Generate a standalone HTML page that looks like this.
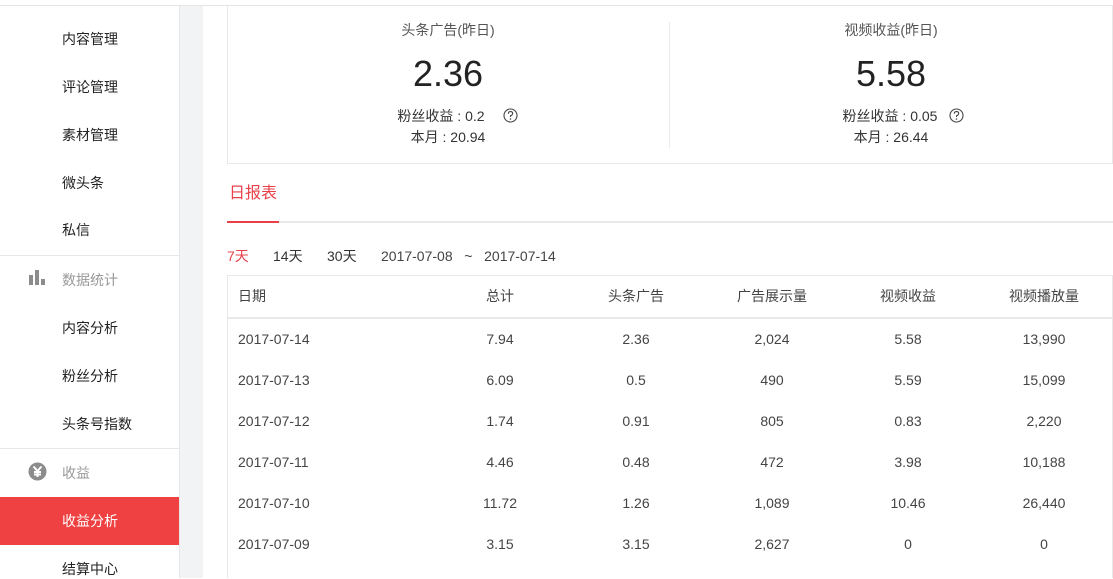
<!DOCTYPE html>
<html><head><meta charset="utf-8"><style>
*{margin:0;padding:0;box-sizing:border-box}
body{width:1113px;height:578px;overflow:hidden;background:#fff;position:relative;font-family:"Liberation Sans","Noto Sans CJK SC",sans-serif;color:#333;font-size:14px}
.a{position:absolute;white-space:nowrap}
.si{position:absolute;left:62px;font-size:14px;color:#222;line-height:20px}
.c{position:absolute;text-align:center;line-height:20px;color:#333}
</style></head><body>
<div class="a" style="left:0;top:5px;width:1113px;height:1px;background:#e4e4e4"></div>
<div class="a" style="left:179px;top:6px;width:24px;height:572px;background:#f2f3f5;border-left:1px solid #e6e7ea"></div>
<div class="si" style="top:29px">内容管理</div>
<div class="si" style="top:77px">评论管理</div>
<div class="si" style="top:125px">素材管理</div>
<div class="si" style="top:173px">微头条</div>
<div class="si" style="top:220px">私信</div>
<div class="a" style="left:0;top:255px;width:179px;height:1px;background:#e8e8e8"></div>
<svg class="a" style="left:28px;top:270px" width="18" height="16"><rect x="1" y="5" width="4" height="10" fill="#8c8c8c"/><rect x="7" y="0" width="4" height="15" fill="#8c8c8c"/><rect x="13" y="9" width="4" height="6" fill="#8c8c8c"/></svg>
<div class="si" style="top:270px;color:#999">数据统计</div>
<div class="si" style="top:318px">内容分析</div>
<div class="si" style="top:366px">粉丝分析</div>
<div class="si" style="top:414px">头条号指数</div>
<div class="a" style="left:0;top:448px;width:179px;height:1px;background:#e8e8e8"></div>
<svg class="a" style="left:28px;top:462px" width="19" height="19"><circle cx="9.5" cy="9.5" r="9" fill="#8c8c8c"/><path d="M5.5 4.5 L9.5 9 L13.5 4.5 M9.5 9 V15 M6 10 H13 M6 12.5 H13" stroke="#fff" stroke-width="2" fill="none"/></svg>
<div class="si" style="top:463px;color:#999">收益</div>
<div class="a" style="left:0;top:497px;width:179px;height:48px;background:#f04142"></div>
<div class="si" style="top:511px;color:#fff">收益分析</div>
<div class="si" style="top:559px">结算中心</div>

<div class="a" style="left:227px;top:5px;width:886px;height:159px;border:1px solid #e8e8e8;border-top:none"></div>
<div class="a" style="left:669px;top:22px;width:1px;height:126px;background:#ececec"></div>
<div class="c" style="left:348px;width:200px;top:20px;color:#555">头条广告(昨日)</div>
<div class="c" style="left:348px;width:200px;top:54px;font-size:36px;line-height:40px;color:#222">2.36</div>
<div class="c" style="left:341px;width:200px;top:106px">粉丝收益&nbsp;:&nbsp;0.2</div>
<svg class="a" style="left:503px;top:108px" width="15" height="15"><circle cx="7.5" cy="7.5" r="6.5" fill="none" stroke="#444" stroke-width="1.1"/><path d="M5.3 5.8 Q5.3 3.6 7.5 3.6 Q9.7 3.6 9.7 5.5 Q9.7 6.8 7.5 7.8 V9" fill="none" stroke="#444" stroke-width="1.1"/><circle cx="7.5" cy="11" r=".8" fill="#444"/></svg>
<div class="c" style="left:348px;width:200px;top:127px">本月&nbsp;:&nbsp;20.94</div>
<div class="c" style="left:791px;width:200px;top:20px;color:#555">视频收益(昨日)</div>
<div class="c" style="left:791px;width:200px;top:54px;font-size:36px;line-height:40px;color:#222">5.58</div>
<div class="c" style="left:790px;width:200px;top:106px">粉丝收益&nbsp;:&nbsp;0.05</div>
<svg class="a" style="left:949px;top:108px" width="15" height="15"><circle cx="7.5" cy="7.5" r="6.5" fill="none" stroke="#444" stroke-width="1.1"/><path d="M5.3 5.8 Q5.3 3.6 7.5 3.6 Q9.7 3.6 9.7 5.5 Q9.7 6.8 7.5 7.8 V9" fill="none" stroke="#444" stroke-width="1.1"/><circle cx="7.5" cy="11" r=".8" fill="#444"/></svg>
<div class="c" style="left:791px;width:200px;top:127px">本月&nbsp;:&nbsp;26.44</div>

<div class="a" style="left:229px;top:183px;font-size:16px;color:#e8414a;line-height:22px">日报表</div>
<div class="a" style="left:227px;top:221px;width:886px;height:2px;background:#e8e8e8"></div>
<div class="a" style="left:227px;top:221px;width:52px;height:2px;background:#e8414a"></div>
<div class="a" style="left:227px;top:246px;line-height:20px;color:#e8414a">7天</div>
<div class="a" style="left:273px;top:246px;line-height:20px">14天</div>
<div class="a" style="left:327px;top:246px;line-height:20px">30天</div>
<div class="a" style="left:381px;top:246px;line-height:20px;color:#444">2017-07-08 &nbsp;&nbsp;~&nbsp;&nbsp; 2017-07-14</div>

<div class="a" style="left:227px;top:275px;width:886px;height:303px;border:1px solid #e8e8e8;border-bottom:none"></div>
<div class="a" style="left:228px;top:317px;width:885px;height:2px;background:#e8e8e8"></div>
<div id="t"></div>
<script>
var rows=[["日期","总计","头条广告","广告展示量","视频收益","视频播放量"],
["2017-07-14","7.94","2.36","2,024","5.58","13,990"],
["2017-07-13","6.09","0.5","490","5.59","15,099"],
["2017-07-12","1.74","0.91","805","0.83","2,220"],
["2017-07-11","4.46","0.48","472","3.98","10,188"],
["2017-07-10","11.72","1.26","1,089","10.46","26,440"],
["2017-07-09","3.15","3.15","2,627","0","0"]];
var ys=[286,329,370,411,452,493,534],cx=[500,636,772,908,1044],h="";
rows.forEach(function(r,i){h+='<div class="a" style="left:238px;top:'+ys[i]+'px;line-height:20px;color:#444">'+r[0]+'</div>';
for(var j=1;j<6;j++)h+='<div class="c" style="left:'+(cx[j-1]-68)+'px;width:136px;top:'+ys[i]+'px;color:#444">'+r[j]+'</div>';});
document.getElementById("t").innerHTML=h;
</script>
</body></html>
